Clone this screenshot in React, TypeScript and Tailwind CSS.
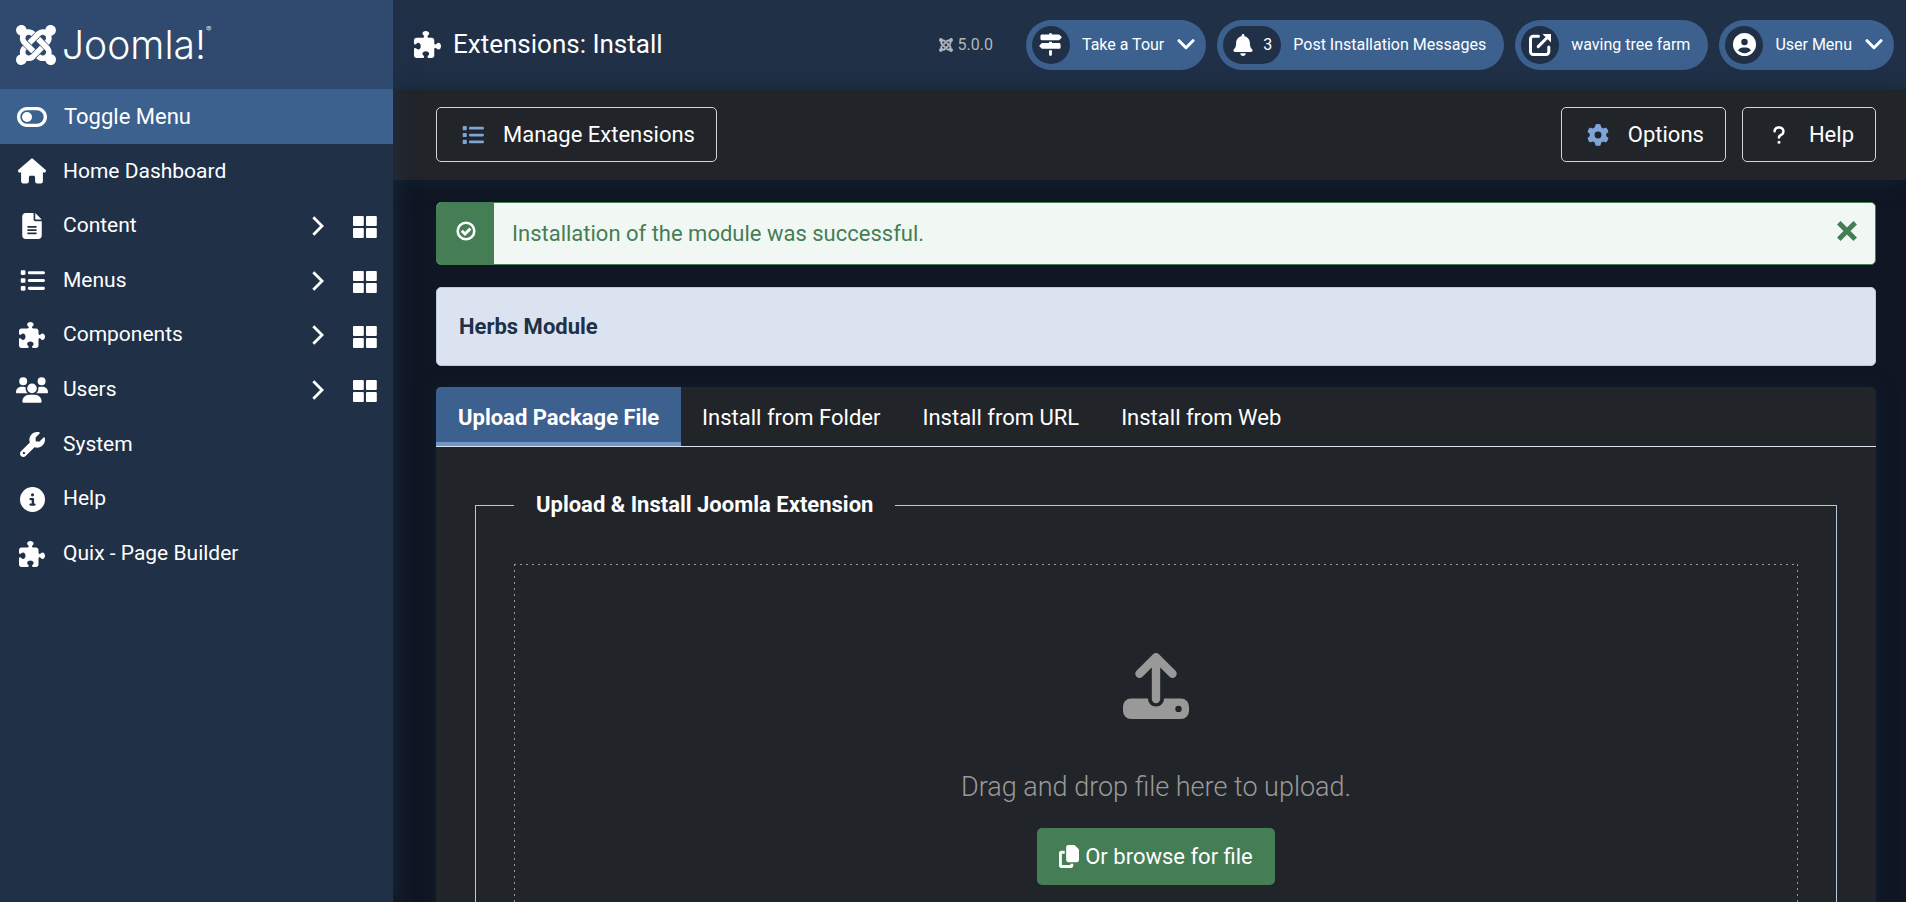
import type { ReactNode } from "react";
import {
  FaBell,
  FaCircleInfo,
  FaCircleUser,
  FaCopy,
  FaFileLines,
  FaGear,
  FaHouse,
  FaJoomla,
  FaList,
  FaPuzzlePiece,
  FaQuestion,
  FaSignsPost,
  FaToggleOff,
  FaUsers,
  FaWrench,
} from "react-icons/fa6";

type MenuItem = { label: string; icon: ReactNode; nested?: boolean };

const menu: MenuItem[] = [
  { label: "Home Dashboard", icon: <FaHouse className="size-7" /> },
  { label: "Content", icon: <FaFileLines className="size-[26px]" />, nested: true },
  { label: "Menus", icon: <FaList className="size-[25px]" />, nested: true },
  { label: "Components", icon: <FaPuzzlePiece className="size-[26px]" />, nested: true },
  { label: "Users", icon: <FaUsers className="size-8" />, nested: true },
  { label: "System", icon: <FaWrench className="size-[25px]" /> },
  { label: "Help", icon: <FaCircleInfo className="size-[25px]" /> },
  { label: "Quix - Page Builder", icon: <FaPuzzlePiece className="size-[26px]" /> },
];

const tabs = ["Upload Package File", "Install from Folder", "Install from URL", "Install from Web"];

function ChevronRight() {
  return (
    <svg viewBox="0 0 12 20" className="h-5 w-3" fill="none" stroke="currentColor" strokeWidth="2.8" aria-hidden="true">
      <path d="M1.3 1.3 10 10 1.3 18.7" />
    </svg>
  );
}

function ChevronDown() {
  return (
    <svg viewBox="0 0 18 12" className="h-3 w-[18px]" fill="none" stroke="currentColor" strokeWidth="3" strokeLinecap="round" strokeLinejoin="round" aria-hidden="true">
      <path d="M2 1.7 9 8.7 16 1.7" />
    </svg>
  );
}

function Tiles() {
  return (
    <svg viewBox="0 0 24 24" className="size-6" fill="currentColor" aria-hidden="true">
      <rect x="0" y="1" width="10.8" height="10" rx="1" />
      <rect x="13" y="1" width="10.8" height="10" rx="1" />
      <rect x="0" y="13" width="10.8" height="10" rx="1" />
      <rect x="13" y="13" width="10.8" height="10" rx="1" />
    </svg>
  );
}

function CheckRing() {
  return (
    <svg viewBox="0 0 20 20" className="size-5" fill="none" stroke="currentColor" aria-hidden="true">
      <circle cx="10" cy="10" r="8.3" strokeWidth="2.6" />
      <path d="M5.8 9.8 9 13 14.4 7.6" strokeWidth="3" />
    </svg>
  );
}

function ExternalLink() {
  return (
    <svg viewBox="0 0 24 24" className="size-6" fill="none" stroke="currentColor" strokeWidth="3" aria-hidden="true">
      <path d="M10.5 3.2H5.2A2.7 2.7 0 0 0 2.5 5.9V18.8A2.7 2.7 0 0 0 5.2 21.5H18.1A2.7 2.7 0 0 0 20.8 18.8V14" strokeLinecap="round" />
      <path d="M10.2 13.6 20 3.8" strokeLinecap="round" />
      <path d="M14.5 1H23V9.5Z" fill="currentColor" stroke="none" />
    </svg>
  );
}

function UploadDrive() {
  return (
    <svg viewBox="0 0 66 66" className="size-[66px]" fill="currentColor" aria-hidden="true">
      <path d="M8 45.5H25C25 50 28.5 53.5 33 53.5S41 50 41 45.5H58A8 8 0 0 1 66 53.5V58A8 8 0 0 1 58 66H8A8 8 0 0 1 0 58V53.5A8 8 0 0 1 8 45.5ZM55.5 52.7A3.2 3.2 0 1 0 55.5 59.1 3.2 3.2 0 1 0 55.5 52.7Z" fillRule="evenodd" />
      <path d="M33 46V5M16.5 20.8 33 4.3 49.5 20.8" fill="none" stroke="currentColor" strokeWidth="8.4" strokeLinecap="round" strokeLinejoin="round" />
    </svg>
  );
}

function Pill({ icon, children, chevron, count }: { icon: ReactNode; children: ReactNode; chevron?: boolean; count?: number }) {
  return (
    <a href="#" className={"flex h-[50px] items-center whitespace-nowrap rounded-full bg-[#3d618f] pl-[6px] text-base text-white " + (chevron ? "pr-[11px]" : "pr-[18px]")}>
      <span className={"flex h-[38px] items-center justify-center rounded-full bg-[#203047] " + (count ? "w-[58px] gap-[9px]" : "w-[38px]")}>
        {icon}
        {count && <span>{count}</span>}
      </span>
      <span className="pl-3">{children}</span>
      {chevron && <span className="pl-[13px]"><ChevronDown /></span>}
    </a>
  );
}

function ToolButton({ icon, children }: { icon: ReactNode; children: ReactNode }) {
  return (
    <button type="button" className="flex h-[55px] items-center gap-4 whitespace-nowrap rounded-[5px] border border-[#ced4da] pl-[22px] pr-[21px] text-[22px] text-white">
      <span className="flex w-7 justify-center">{icon}</span>
      {children}
    </button>
  );
}

function Sidebar() {
  return (
    <aside className="z-10 flex w-[393px] shrink-0 flex-col bg-[#203047] shadow-[0_0_20px_rgba(32,48,71,0.8)]">
      <a href="#" aria-label="Joomla!" className="flex h-[89px] items-center gap-[6px] bg-[#2f4a6e] pl-4 text-white">
        <FaJoomla className="h-[46px] w-10" />
        <span className="flex items-start font-[Inter,sans-serif] text-[39px] font-light leading-10">
          Joomla!<sup className="text-[8px] leading-4">®</sup>
        </span>
      </a>
      <button type="button" className="flex h-[55px] items-center bg-[#3d618f] pl-[15px] text-left">
        <span className="flex w-[34px] justify-center"><FaToggleOff className="size-[30px]" /></span>
        <span className="pl-[15px] text-[22px]">Toggle Menu</span>
      </button>
      <nav aria-label="Main menu">
        <ul className="grid h-[437px] auto-rows-fr text-[21px]">
          {menu.map((item) => (
            <li key={item.label} className="flex items-center pr-4">
              <a href="#" className="flex flex-1 items-center pl-[15px] pr-3">
                <span className="flex w-[34px] justify-center">{item.icon}</span>
                <span className="flex-1 pl-[14px]">{item.label}</span>
                {item.nested && <ChevronRight />}
              </a>
              {item.nested && (
                <a href="#" aria-label={item.label + " Dashboard"} className="pl-[17px] pt-[3px]">
                  <Tiles />
                </a>
              )}
            </li>
          ))}
        </ul>
      </nav>
    </aside>
  );
}

function Header() {
  return (
    <header className="flex h-[89px] shrink-0 items-center justify-between bg-[#203047] pl-[21px] pr-3">
      <h1 className="flex items-center gap-3 whitespace-nowrap text-[26px]">
        <FaPuzzlePiece className="size-[27px]" />
        Extensions: Install
      </h1>
      <div className="flex items-center gap-[11px]">
        <div className="flex items-center gap-[5px] pr-[22px] text-base text-[#b0b6bf]">
          <FaJoomla className="h-4 w-[14px]" />
          5.0.0
        </div>
        <Pill icon={<FaSignsPost className="size-[23px]" />} chevron>Take a Tour</Pill>
        <Pill icon={<FaBell className="size-[22px]" />} count={3}>Post Installation Messages</Pill>
        <Pill icon={<ExternalLink />}>waving tree farm</Pill>
        <Pill icon={<FaCircleUser className="size-[23px]" />} chevron>User Menu</Pill>
      </div>
    </header>
  );
}

export default function App() {
  return (
    <div className="flex h-screen overflow-hidden bg-[#101623] font-[Roboto,sans-serif] text-[22px] text-white">
      <Sidebar />
      <div className="flex min-w-0 flex-1 flex-col">
        <Header />
        <div className="flex shrink-0 items-center gap-4 bg-[#212529] py-[18px] pl-[43px] pr-[30px] shadow-[0_2px_20px_rgba(16,34,51,0.8)]">
          <ToolButton icon={<FaList className="size-[22px] text-[#7ea4d8]" />}>Manage Extensions</ToolButton>
          <span className="flex-1" />
          <ToolButton icon={<FaGear className="size-[22px] text-[#7ea4d8]" />}>Options</ToolButton>
          <ToolButton icon={<FaQuestion className="size-5" />}>Help</ToolButton>
        </div>
        <main className="flex flex-1 flex-col pl-[43px] pr-[30px] pt-[22px]">
          <div role="alert" className="flex h-[63px] shrink-0 overflow-hidden rounded-[5px] border border-[#457d54] bg-[#f1f8f4] text-[#457d54]">
            <span className="flex w-[57px] items-center justify-center bg-[#457d54] pb-[6px] text-white">
              <CheckRing />
            </span>
            <p className="flex flex-1 items-center pl-[18px]">Installation of the module was successful.</p>
            <button type="button" aria-label="Close" className="px-[18px] pb-[6px]">
              <svg viewBox="0 0 20 20" className="size-5" stroke="currentColor" strokeWidth="5" aria-hidden="true">
                <path d="M1.8 1.8 18.2 18.2M18.2 1.8 1.8 18.2" />
              </svg>
            </button>
          </div>
          <section className="mt-[22px] flex h-[79px] shrink-0 items-center rounded-[5px] border border-[#b8c9e0] bg-[#dce3f0] px-[22px] font-bold text-[#203047]">
            Herbs Module
          </section>
          <section className="mt-[21px] flex flex-1 flex-col rounded-t-[5px] bg-[#212529] shadow-[0_2px_20px_rgba(16,34,51,0.8)]">
            <div role="tablist" className="flex h-[60px] shrink-0 overflow-hidden rounded-t-[5px] border-b border-[#dce3f0]">
              {tabs.map((tab, i) => (
                <button
                  key={tab}
                  type="button"
                  role="tab"
                  aria-selected={i === 0}
                  className={"pt-px " + (i === 0 ? "bg-[#3d618f] px-[22px] font-bold shadow-[inset_0_-4px_0_#7296c8]" : "px-[21px]")}
                >
                  {tab}
                </button>
              ))}
            </div>
            <fieldset className="mx-[39px] mt-[43px] flex flex-1 flex-col border border-b-0 border-[#b2cbe5] px-[38px]">
              <legend className="px-[22px] font-bold leading-[30px]">Upload &amp; Install Joomla Extension</legend>
              <div className="mt-11 flex h-[420px] shrink-0 flex-col items-center bg-no-repeat pt-[89px] text-[#999] [background-image:repeating-linear-gradient(90deg,#999_0_2px,transparent_2px_6px),repeating-linear-gradient(180deg,#999_0_2px,transparent_2px_6px),repeating-linear-gradient(180deg,#999_0_2px,transparent_2px_6px)] [background-position:top,left,right] [background-size:100%_1px,1px_100%,1px_100%]">
                <UploadDrive />
                <p className="mt-12 text-[27px] font-light leading-10">Drag and drop file here to upload.</p>
                <button type="button" className="mt-[21px] flex h-[57px] items-center gap-[6px] rounded-[5px] bg-[#457d54] px-[22px] text-white">
                  <FaCopy className="h-[23px] w-5" />
                  Or browse for file
                </button>
              </div>
            </fieldset>
          </section>
        </main>
      </div>
    </div>
  );
}
